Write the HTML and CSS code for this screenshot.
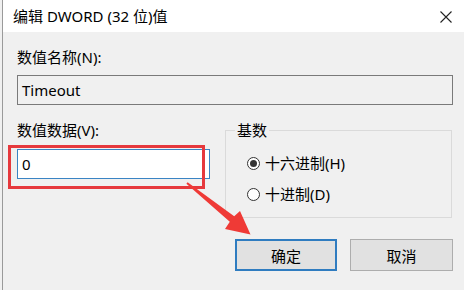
FILE: index.html
```html
<!DOCTYPE html>
<html lang="zh-CN">
<head>
<meta charset="UTF-8">
<title>编辑 DWORD (32 位)值</title>
<link rel="stylesheet" href="styles.css">
</head>
<body>
<div class="dialog">
  <div class="titlebar">
    <span class="title">编辑 DWORD (32 位)值</span>
    <svg class="close" width="12" height="12" viewBox="0 0 12 12">
      <path d="M0.5 0.5 L11.5 11.5 M11.5 0.5 L0.5 11.5" stroke="#222" stroke-width="1.1" fill="none"/>
    </svg>
  </div>

  <div class="content">
    <div class="label">数值名称(N):</div>
    <div class="box name-box">Timeout</div>

    <div class="row">
      <div class="data-col">
        <div class="label">数值数据(V):</div>
        <div class="box value-box">0</div>
      </div>
      <fieldset class="base">
        <legend>基数</legend>
        <div class="radio"><span class="dot checked"></span>十六进制(H)</div>
        <div class="radio"><span class="dot"></span>十进制(D)</div>
      </fieldset>
    </div>

    <div class="buttons">
      <div class="btn default">确定</div>
      <div class="btn">取消</div>
    </div>
  </div>
</div>

<!-- annotation overlay -->
<div class="mark"></div>
<svg class="arrow" width="464" height="290" viewBox="0 0 464 290">
  <polygon points="187.6,182.2 234.2,216.3 240,211 250.5,234.5 225,229 229.8,221.7 186.4,183.8" fill="#ef3a36"/>
</svg>
</body>
</html>
```

FILE: styles.css
```css
body {
  margin: 0;
  width: 464px;
  height: 290px;
  overflow: hidden;
  background: #f0f0f0;
  font-family: "Noto Sans", "Noto Sans CJK SC", sans-serif;
  font-size: 15px;
  color: #000;
}

.dialog {
  margin-left: 2px;
  height: 290px;
  border-left: 1px solid #9a9a9a;
}

.titlebar {
  height: 32px;
  background: #fff;
  display: flex;
  align-items: center;
  justify-content: space-between;
  padding: 0 12px 0 10px;
}
.title {
  line-height: 20px;
}
.close {
  margin-top: 1px;
}

.content {
  padding: 15px 11px 0 14px;
}

.label {
  line-height: 20px;
}

.box {
  box-sizing: border-box;
  height: 30px;
  line-height: 28px;
  padding-left: 4px;
}
.name-box {
  margin-top: 8px;
  border: 1px solid #7a7a7a;
  background: #f0f0f0;
}

.row {
  display: flex;
  align-items: flex-start;
  gap: 15px;
  margin-top: 15px;
}
.data-col {
  width: 193px;
}
.value-box {
  margin-top: 9px;
  border: 1px solid #3a84c4;
  background: #fff;
}

/* 基数 group */
.base {
  box-sizing: border-box;
  width: 227px;
  margin: 0;
  padding: 0 0 13px 9px;
  border: 1px solid #dadada;
  min-width: 0;
}
.base legend {
  padding: 0 2px;
  line-height: 20px;
}
.radio {
  display: flex;
  align-items: center;
  line-height: 20px;
  margin-left: 12px;
  margin-top: 11px;
}
.radio:first-of-type {
  margin-top: 13px;
}
.dot {
  box-sizing: border-box;
  width: 13px;
  height: 13px;
  border: 1px solid #333;
  border-radius: 50%;
  background: #fff;
  margin-right: 5px;
  position: relative;
}
.dot.checked::after {
  content: "";
  position: absolute;
  left: 2px;
  top: 2px;
  width: 7px;
  height: 7px;
  border-radius: 50%;
  background: #333;
}

.buttons {
  display: flex;
  justify-content: flex-end;
  gap: 13px;
  margin-top: 21px;
}
.btn {
  box-sizing: border-box;
  width: 103px;
  height: 32px;
  background: #e1e1e1;
  border: 1px solid #adadad;
  display: flex;
  align-items: center;
  justify-content: center;
}
.btn.default {
  width: 102px;
  border: 2px solid #2f7cc0;
}

/* red annotation */
.mark {
  position: absolute;
  left: 8px;
  top: 145px;
  width: 197px;
  height: 44px;
  box-sizing: border-box;
  border: 3px solid #e6393d;
}
.arrow {
  position: absolute;
  left: 0;
  top: 0;
  pointer-events: none;
}
```
